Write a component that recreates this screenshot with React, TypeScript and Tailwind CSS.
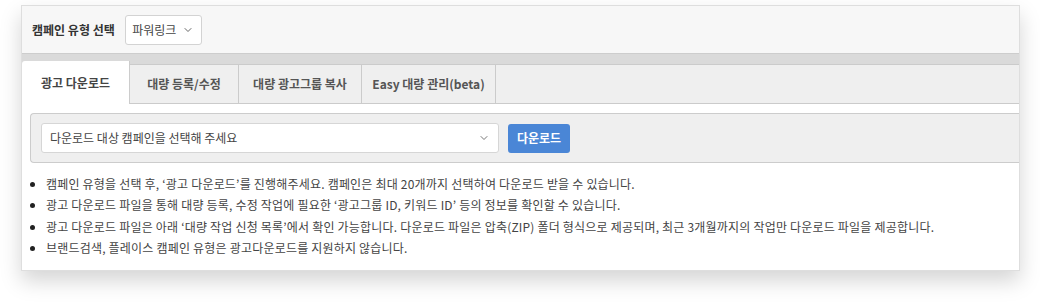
import { ChevronDown } from 'lucide-react'

const tabs = ['광고 다운로드', '대량 등록/수정', '대량 광고그룹 복사', 'Easy 대량 관리(beta)']
const tabWidths = ['w-[108px]', 'w-[109px]', 'w-[123px]', 'w-[134px]']

const notes = [
  '캠페인 유형을 선택 후, ‘광고 다운로드’를 진행해주세요. 캠페인은 최대 20개까지 선택하여 다운로드 받을 수 있습니다.',
  '광고 다운로드 파일을 통해 대량 등록, 수정 작업에 필요한 ‘광고그룹 ID, 키워드 ID’ 등의 정보를 확인할 수 있습니다.',
  '광고 다운로드 파일은 아래 ‘대량 작업 신청 목록’에서 확인 가능합니다. 다운로드 파일은 압축(ZIP) 폴더 형식으로 제공되며, 최근 3개월까지의 작업만 다운로드 파일을 제공합니다.',
  '브랜드검색, 플레이스 캠페인 유형은 광고다운로드를 지원하지 않습니다.',
]

export default function App() {
  return (
    <div
      className="w-[1040px] h-[307px] bg-white pt-[5px] pl-[21px] overflow-hidden"
      style={{ fontFamily: '"Noto Sans CJK KR", "Noto Sans", sans-serif' }}
    >
      <div className="w-[999px] h-[266px] bg-white border border-[#dedede] shadow-[0_10px_20px_rgba(0,0,0,0.17)] overflow-hidden">
        {/* 캠페인 유형 */}
        <div className="h-[48px] bg-[#f7f7f7] border-b border-[#cdcdcd] flex items-center pl-[10px] gap-[10px]">
          <span className="text-[12px] font-bold text-[#333] leading-none">캠페인 유형 선택</span>
          <button className="h-[30px] w-[77px] bg-white border border-[#d3d3d3] rounded-[3px] flex items-center justify-center gap-[6px] text-[12px] text-[#444]">
            파워링크
            <ChevronDown className="w-[12px] h-[12px] text-[#666]" strokeWidth={2} />
          </button>
        </div>

        {/* 탭 */}
        <div className="bg-[#dadada] pt-[7px]">
          <div className="flex items-end h-[43px]">
            {tabs.map((t, i) =>
              i === 0 ? (
                <div
                  key={t}
                  className={`${tabWidths[i]} h-[43px] bg-white rounded-tl-[3px] border-r border-[#cccccc] flex items-center justify-center text-[12px] font-bold text-[#444]`}
                >
                  {t}
                </div>
              ) : (
                <div
                  key={t}
                  className={`${tabWidths[i]} h-[40px] bg-[#efefef] border-t border-b border-r border-[#cbcbcb] flex items-center justify-center text-[12px] font-bold text-[#555]`}
                >
                  {t}
                </div>
              )
            )}
            <div className="flex-1 h-[40px] bg-[#efefef] border-t border-b border-[#cbcbcb]" />
          </div>
        </div>

        {/* 다운로드 */}
        <div className="pt-[9px] pl-[8px]">
          <div className="h-[50px] bg-[#efefef] border border-[#cccccc] rounded-l-[4px] border-r-0 flex items-center pl-[10px]">
            <div className="w-[458px] h-[30px] bg-white border border-[#d6d6d6] rounded-[3px] flex items-center justify-between pl-[8px] pr-[8px] text-[12px] text-[#444]">
              <span>다운로드 대상 캠페인을 선택해 주세요</span>
              <ChevronDown className="w-[12px] h-[12px] text-[#777]" strokeWidth={2} />
            </div>
            <button className="ml-[9px] w-[62px] h-[29px] bg-[#4a86d6] rounded-[3px] text-[12px] font-bold text-white">
              다운로드
            </button>
          </div>
        </div>

        <ul className="mt-[10px] pl-[24px] list-disc marker:text-[#222] text-[12px] text-[#444] leading-[21.3px] tracking-[0.2px]">
          {notes.map((n) => (
            <li key={n}>{n}</li>
          ))}
        </ul>
      </div>
    </div>
  )
}
